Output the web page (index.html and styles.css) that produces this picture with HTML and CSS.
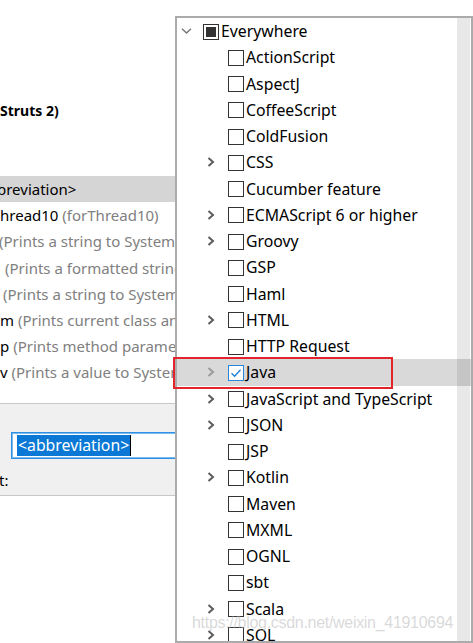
FILE: index.html
```html
<!DOCTYPE html>
<html>
<head>
<meta charset="utf-8">
<link rel="stylesheet" href="styles.css">
</head>
<body>
<div class="page">
  <div class="top">
    <div class="title">Struts 2)</div>
    <ul class="tpl">
      <li class="sel"><span class="ab cut3">breviation&gt;</span></li>
      <li><span class="ab">hread10</span> <span class="ds">(forThread10)</span></li>
      <li><span class="ds cut1">(Prints a string to System.out)</span></li>
      <li><span class="ds in6">(Prints a formatted string to System.out)</span></li>
      <li><span class="ds in3">(Prints a string to System.err)</span></li>
      <li><span class="ab">m</span> <span class="ds">(Prints current class and method names)</span></li>
      <li><span class="ab">p</span> <span class="ds">(Prints method parameter names)</span></li>
      <li><span class="ab">v</span> <span class="ds">(Prints a value to System.out)</span></li>
    </ul>
  </div>
  <div class="form">
    <div class="field"><span class="hl">&lt;abbreviation&gt;</span><span class="caret"></span></div>
    <div class="lbl">t:</div>
  </div>
</div>

<div class="popup">
  <div class="tree">
    <div class="row d0"><span class="exp"><svg class="down" width="11" height="6" viewBox="0 0 11 6"><path d="M1 0.8 L5.5 5 L10 0.8" fill="none" stroke="#7a7a7a" stroke-width="1.5"/></svg></span><span class="cb ind"></span><span class="tx">Everywhere</span></div>
    <div class="row d1"><span class="exp"></span><span class="cb"></span><span class="tx">ActionScript</span></div>
    <div class="row d1"><span class="exp"></span><span class="cb"></span><span class="tx">AspectJ</span></div>
    <div class="row d1"><span class="exp"></span><span class="cb"></span><span class="tx">CoffeeScript</span></div>
    <div class="row d1"><span class="exp"></span><span class="cb"></span><span class="tx">ColdFusion</span></div>
    <div class="row d1"><span class="exp"><svg class="right" width="8" height="10" viewBox="0 0 8 10"><path d="M1.5 1 L6 5 L1.5 9" fill="none" stroke="#5c5c5c" stroke-width="2"/></svg></span><span class="cb"></span><span class="tx">CSS</span></div>
    <div class="row d1"><span class="exp"></span><span class="cb"></span><span class="tx">Cucumber feature</span></div>
    <div class="row d1"><span class="exp"><svg class="right" width="8" height="10" viewBox="0 0 8 10"><path d="M1.5 1 L6 5 L1.5 9" fill="none" stroke="#5c5c5c" stroke-width="2"/></svg></span><span class="cb"></span><span class="tx">ECMAScript 6 or higher</span></div>
    <div class="row d1"><span class="exp"><svg class="right" width="8" height="10" viewBox="0 0 8 10"><path d="M1.5 1 L6 5 L1.5 9" fill="none" stroke="#5c5c5c" stroke-width="2"/></svg></span><span class="cb"></span><span class="tx">Groovy</span></div>
    <div class="row d1"><span class="exp"></span><span class="cb"></span><span class="tx">GSP</span></div>
    <div class="row d1"><span class="exp"></span><span class="cb"></span><span class="tx">Haml</span></div>
    <div class="row d1"><span class="exp"><svg class="right" width="8" height="10" viewBox="0 0 8 10"><path d="M1.5 1 L6 5 L1.5 9" fill="none" stroke="#5c5c5c" stroke-width="2"/></svg></span><span class="cb"></span><span class="tx">HTML</span></div>
    <div class="row d1"><span class="exp"></span><span class="cb"></span><span class="tx">HTTP Request</span></div>
    <div class="row d1 cur"><span class="exp"><svg class="right" width="8" height="10" viewBox="0 0 8 10"><path d="M1.5 1 L6 5 L1.5 9" fill="none" stroke="#9a9a9a" stroke-width="2"/></svg></span><span class="cb on"><svg width="14" height="14" viewBox="0 0 14 14"><path d="M2.5 7.2 L5.6 10.2 L11.5 3.8" fill="none" stroke="#1a7fd6" stroke-width="1.3"/></svg></span><span class="tx">Java</span></div>
    <div class="row d1"><span class="exp"><svg class="right" width="8" height="10" viewBox="0 0 8 10"><path d="M1.5 1 L6 5 L1.5 9" fill="none" stroke="#5c5c5c" stroke-width="2"/></svg></span><span class="cb"></span><span class="tx">JavaScript and TypeScript</span></div>
    <div class="row d1"><span class="exp"><svg class="right" width="8" height="10" viewBox="0 0 8 10"><path d="M1.5 1 L6 5 L1.5 9" fill="none" stroke="#5c5c5c" stroke-width="2"/></svg></span><span class="cb"></span><span class="tx">JSON</span></div>
    <div class="row d1"><span class="exp"></span><span class="cb"></span><span class="tx">JSP</span></div>
    <div class="row d1"><span class="exp"><svg class="right" width="8" height="10" viewBox="0 0 8 10"><path d="M1.5 1 L6 5 L1.5 9" fill="none" stroke="#5c5c5c" stroke-width="2"/></svg></span><span class="cb"></span><span class="tx">Kotlin</span></div>
    <div class="row d1"><span class="exp"></span><span class="cb"></span><span class="tx">Maven</span></div>
    <div class="row d1"><span class="exp"></span><span class="cb"></span><span class="tx">MXML</span></div>
    <div class="row d1"><span class="exp"></span><span class="cb"></span><span class="tx">OGNL</span></div>
    <div class="row d1"><span class="exp"></span><span class="cb"></span><span class="tx">sbt</span></div>
    <div class="row d1"><span class="exp"><svg class="right" width="8" height="10" viewBox="0 0 8 10"><path d="M1.5 1 L6 5 L1.5 9" fill="none" stroke="#5c5c5c" stroke-width="2"/></svg></span><span class="cb"></span><span class="tx">Scala</span></div>
    <div class="row d1"><span class="exp"><svg class="right" width="8" height="10" viewBox="0 0 8 10"><path d="M1.5 1 L6 5 L1.5 9" fill="none" stroke="#5c5c5c" stroke-width="2"/></svg></span><span class="cb"></span><span class="tx">SQL</span></div>
  </div>
  <div class="scroll"></div>
</div>

<div class="redbox"></div>
<div class="wm">https://blog.csdn.net/weixin_41910694</div>
</body>
</html>
```
FILE: styles.css
```css
html, body {
  margin: 0;
  padding: 0;
}
body {
  width: 473px;
  height: 643px;
  overflow: hidden;
  position: relative;
  background: #ffffff;
  font-family: "Noto Sans", "Open Sans", sans-serif;
  font-size: 15px;
  color: #000;
}
.page {
  width: 473px;
}
.top {
  height: 403px;
  overflow: hidden;
}
.title {
  padding-top: 98px;
  height: 26px;
  line-height: 26px;
  font-weight: bold;
  font-size: 14px;
}
.tpl {
  list-style: none;
  margin: 52px 0 0 0;
  padding: 0;
}
.tpl li {
  height: 26.2px;
  line-height: 26.2px;
  white-space: nowrap;
  overflow: hidden;
}
.tpl li.sel {
  background: #d5d5d5;
}
.ds {
  color: #808080;
}
.cut3 { margin-left: -3px; }
.cut1 { margin-left: -1px; }
.in6 { margin-left: 5px; }
.in3 { margin-left: 3px; }
.ab, .ds { display: inline-block; }

.form {
  border-top: 1px solid #c8c8c8;
  border-bottom: 1px solid #c8c8c8;
  background: #f0f0f0;
  height: 93px;
  box-sizing: border-box;
  padding-top: 28px;
}
.field {
  margin-left: 11px;
  width: 320px;
  height: 27px;
  box-sizing: border-box;
  border: 1px solid #2f8fe3;
  box-shadow: inset 0 0 0 1px #7bbcf0;
  background: #fff;
  display: flex;
  align-items: center;
  padding-left: 5px;
  font-size: 15.8px;
}
.hl {
  background: #0a78d4;
  color: #fff;
  height: 21px;
  line-height: 21px;
  padding: 0 1px;
}
.caret {
  width: 1px;
  height: 21px;
  background: #000;
}
.lbl {
  margin-top: 11px;
  line-height: 20px;
  height: 20px;
  margin-left: -1px;
}

.popup {
  position: absolute;
  left: 175px;
  top: 16px;
  width: 298px;
  height: 627px;
  box-sizing: border-box;
  border: 2px solid #ababab;
  background: #fff;
  overflow: hidden;
  font-size: 15.8px;
}
.tree {
  position: relative;
}
.row {
  height: 26.25px;
  display: flex;
  align-items: center;
  white-space: nowrap;
}
.row.d1 { padding-left: 25px; }
.row.cur { background: #d9d9d9; }
.exp {
  width: 26px;
  height: 26px;
  flex: none;
  display: flex;
  align-items: center;
}
.exp svg.down { margin-left: 4px; margin-top: -1px; }
.exp svg.right { margin-left: 5px; }
.cb {
  width: 16px;
  height: 16px;
  flex: none;
  box-sizing: border-box;
  border: 1px solid #333;
  background: #fff;
  margin-top: 1px;
  position: relative;
}
.cb.ind::after {
  content: "";
  position: absolute;
  left: 2px;
  top: 2px;
  width: 10px;
  height: 10px;
  background: #333;
}
.cb.on {
  border-color: #2b86d8;
}
.cb.on svg {
  position: absolute;
  left: 0;
  top: 0;
}
.tx {
  margin-left: 2px;
  line-height: 26px;
}
.scroll {
  position: absolute;
  top: 0;
  right: 1px;
  width: 13px;
  height: 100%;
  background: rgba(0, 0, 0, 0.09);
}
.redbox {
  position: absolute;
  left: 173px;
  top: 357px;
  width: 220px;
  height: 32px;
  box-sizing: border-box;
  border: 2px solid #e3252b;
}
.wm {
  position: absolute;
  left: 192px;
  top: 614px;
  font-family: "Liberation Sans", Arial, sans-serif;
  font-size: 16px;
  color: rgba(180, 180, 180, 0.5);
  white-space: nowrap;
  letter-spacing: -0.3px;
}
```
